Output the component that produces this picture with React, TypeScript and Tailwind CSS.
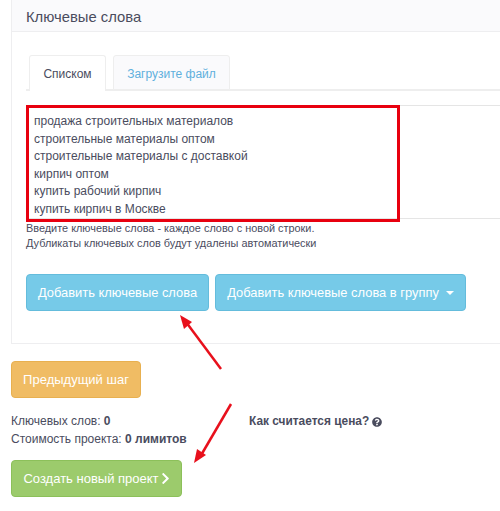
import { FaChevronRight, FaQuestionCircle } from "react-icons/fa";

const keywords = [
  "продажа строительных материалов",
  "строительные материалы оптом",
  "строительные материалы с доставкой",
  "кирпич оптом",
  "купить рабочий кирпич",
  "купить кирпич в Москве",
];

export default function App() {
  return (
    <div className="relative w-[500px] h-[511px] overflow-hidden bg-white text-[#4a4c5e] text-[12px] font-['Liberation_Sans',Arial,sans-serif]">
      <div className="ml-[11px] w-[600px] h-[344px] border border-[#eeeef0] border-t-0">
        <div className="h-[32px] bg-[#fafafc] border-b border-[#eeeef0] pl-[14px] text-[14.8px] leading-[34px]">Ключевые слова</div>

        <div className="pl-[14px] pt-[23px]">
          <div className="flex h-[36px] border-b-2 border-[#eeeeee] pl-[3px]">
            <div className="w-[77px] h-[36px] bg-white border border-[#eeeeee] border-b-0 rounded-t-[3px] text-center leading-[37px]">Списком</div>
            <div className="ml-[7px] w-[117px] h-[35px] bg-[#fafafc] border border-[#eeeeee] rounded-t-[3px] text-center leading-[36px] text-[#5fb0dc]">Загрузите файл</div>
          </div>

          <div className="mt-[14px] h-[114px] border border-[#e5e5e5] border-l-0 pl-[8px] pt-[7px] leading-[17.5px]">
            {keywords.map((k) => (
              <div key={k}>{k}</div>
            ))}
          </div>

          <div className="mt-[2px] text-[10.9px] leading-[15px]">
            <div>Введите ключевые слова - каждое слово с новой строки.</div>
            <div>Дубликаты ключевых слов будут удалены автоматически</div>
          </div>

          <div className="mt-[23px] flex gap-[6px]">
            <button className="w-[183px] h-[37px] rounded-[4px] bg-[#76cae8] border border-[#64bcdc] text-white text-[12.9px]">Добавить ключевые слова</button>
            <button className="w-[251px] h-[37px] rounded-[4px] bg-[#76cae8] border border-[#64bcdc] text-white text-[12.9px] flex items-center justify-center gap-[7px]">
              Добавить ключевые слова в группу
              <svg width="8" height="4" viewBox="0 0 8 4"><path d="M0 0h8L4 4z" fill="#fff" /></svg>
            </button>
          </div>
        </div>
      </div>

      <div className="pl-[11px] pt-[17px]">
        <button className="w-[130px] h-[37px] rounded-[4px] bg-[#f0bc64] border border-[#e8b050] text-white text-[13px]">Предыдущий шаг</button>

        <div className="mt-[15px] flex">
          <div className="w-[238px] leading-[17.5px]">
            <div>Ключевых слов: <b>0</b></div>
            <div>Стоимость проекта: <b>0 лимитов</b></div>
          </div>
          <div className="leading-[17.5px] font-bold text-[11.9px] flex items-center h-[17.5px] gap-[3px]">
            Как считается цена? <FaQuestionCircle className="w-[10px] h-[10px]" />
          </div>
        </div>

        <button className="mt-[12px] w-[171px] h-[37px] rounded-[4px] bg-[#9ccb6c] border border-[#8cc05a] text-white text-[13px] flex items-center justify-center gap-[2px]">
          Создать новый проект <FaChevronRight className="w-[9px] h-[13px]" />
        </button>
      </div>

      {/* red annotations drawn over the form */}
      <div className="absolute left-[26px] top-[105px] w-[374px] h-[117px] border-[3px] border-[#e8000f]" />
      <svg className="absolute left-0 top-0" width="500" height="511" viewBox="0 0 500 511" fill="none">
        <path d="M221 369L186 322" stroke="#e8101c" strokeWidth="2.5" />
        <path d="M180 315L192 322L184 329z" fill="#e8101c" />
        <path d="M231 404L200 457" stroke="#e8101c" strokeWidth="2.5" />
        <path d="M194 463L197 449L206 455z" fill="#e8101c" />
      </svg>
    </div>
  );
}
